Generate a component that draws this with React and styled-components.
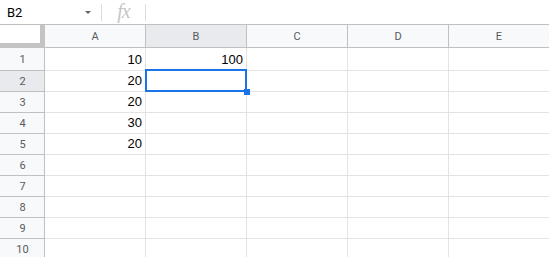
import React from 'react';
import styled, { createGlobalStyle } from 'styled-components';

const GlobalStyle = createGlobalStyle`
    html, body {
        margin: 0;
        padding: 0;
        background: #ffffff;
        overflow: hidden;
    }
`;

const Page = styled.div`
    width: 549px;
    height: 257px;
    overflow: hidden;
    font-family: 'Liberation Sans', Arial, sans-serif;
`;

const FormulaBar = styled.div`
    display: flex;
    align-items: center;
    height: 25px;
    box-sizing: border-box;
    border-bottom: 1px solid #c0c0c0;
`;

const NameBox = styled.div`
    display: flex;
    align-items: center;
    justify-content: space-between;
    width: 101px;
    box-sizing: border-box;
    padding: 0 10px 0 7px;
    font-family: Roboto, 'Liberation Sans', sans-serif;
    font-size: 13px;
    color: #000;
`;

const Caret = styled.span`
    width: 0;
    height: 0;
    border-left: 3px solid transparent;
    border-right: 3px solid transparent;
    border-top: 3px solid #5f6368;
    margin-top: 1px;
`;

const Divider = styled.div`
    width: 1px;
    height: 17px;
    background: #dadce0;
`;

const FxBox = styled.div`
    width: 43px;
    display: flex;
    justify-content: center;
    font-family: 'Liberation Serif', serif;
    font-style: italic;
    font-size: 20px;
    color: #c4c7c5;
    letter-spacing: -1px;
    padding-bottom: 2px;
`;

const Grid = styled.div`
    display: grid;
    grid-template-columns: 45px repeat(5, 101px);
`;

const Corner = styled.div`
    box-sizing: border-box;
    height: 23px;
    background: #ffffff;
    border-right: 5px solid #c4c4c4;
    border-bottom: 5px solid #c4c4c4;
`;

const ColHeader = styled.div`
    box-sizing: border-box;
    height: 23px;
    display: flex;
    align-items: center;
    justify-content: center;
    font-family: Roboto, 'Liberation Sans', sans-serif;
    font-size: 11px;
    color: #575a5e;
    background: ${p => (p.$active ? '#e8eaed' : '#f8f9fa')};
    border-right: 1px solid #c0c0c0;
    border-bottom: 1px solid #c0c0c0;
`;

const RowHeader = styled.div`
    box-sizing: border-box;
    height: ${p => (p.$tall ? 23 : 21)}px;
    display: flex;
    align-items: center;
    justify-content: center;
    padding-left: 1px;
    font-family: Roboto, 'Liberation Sans', sans-serif;
    font-size: 11px;
    color: #575a5e;
    background: ${p => (p.$active ? '#e8eaed' : '#f8f9fa')};
    border-right: 1px solid #c0c0c0;
    border-bottom: 1px solid #c0c0c0;
`;

const Cell = styled.div`
    position: relative;
    box-sizing: border-box;
    height: ${p => (p.$tall ? 23 : 21)}px;
    display: flex;
    align-items: flex-end;
    justify-content: flex-end;
    padding: 0 3px 3px 0;
    font-size: 13px;
    color: #000;
    border-right: 1px solid #e2e3e3;
    border-bottom: 1px solid #e2e3e3;
`;

// blue selection frame + fill handle, lies over the cell borders
const Selection = styled.div`
    position: absolute;
    z-index: 1;
    left: -1px;
    top: -2px;
    right: -1px;
    bottom: -1px;
    border: 2px solid #1a73e8;
    pointer-events: none;

    &::after {
        content: '';
        position: absolute;
        right: -5px;
        bottom: -5px;
        width: 6px;
        height: 6px;
        background: #1a73e8;
    }
`;

const columns = ['A', 'B', 'C', 'D', 'E'];
const data = [
    ['10', '100'],
    ['20'],
    ['20'],
    ['30'],
    ['20'],
    [],
    [],
    [],
    [],
    [],
];

export default function App() {
    return (
        <Page>
            <GlobalStyle />
            <FormulaBar>
                <NameBox>
                    <span>B2</span>
                    <Caret />
                </NameBox>
                <Divider />
                <FxBox>fx</FxBox>
                <Divider />
            </FormulaBar>
            <Grid>
                <Corner />
                {columns.map(c => (
                    <ColHeader key={c} $active={c === 'B'}>
                        {c}
                    </ColHeader>
                ))}
                {data.map((row, r) => (
                    <React.Fragment key={r}>
                        <RowHeader $active={r === 1} $tall={r === 0}>
                            {r + 1}
                        </RowHeader>
                        {columns.map((c, ci) => (
                            <Cell key={c} $tall={r === 0}>
                                {row[ci] || ''}
                                {r === 1 && c === 'B' && <Selection />}
                            </Cell>
                        ))}
                    </React.Fragment>
                ))}
            </Grid>
        </Page>
    );
}
